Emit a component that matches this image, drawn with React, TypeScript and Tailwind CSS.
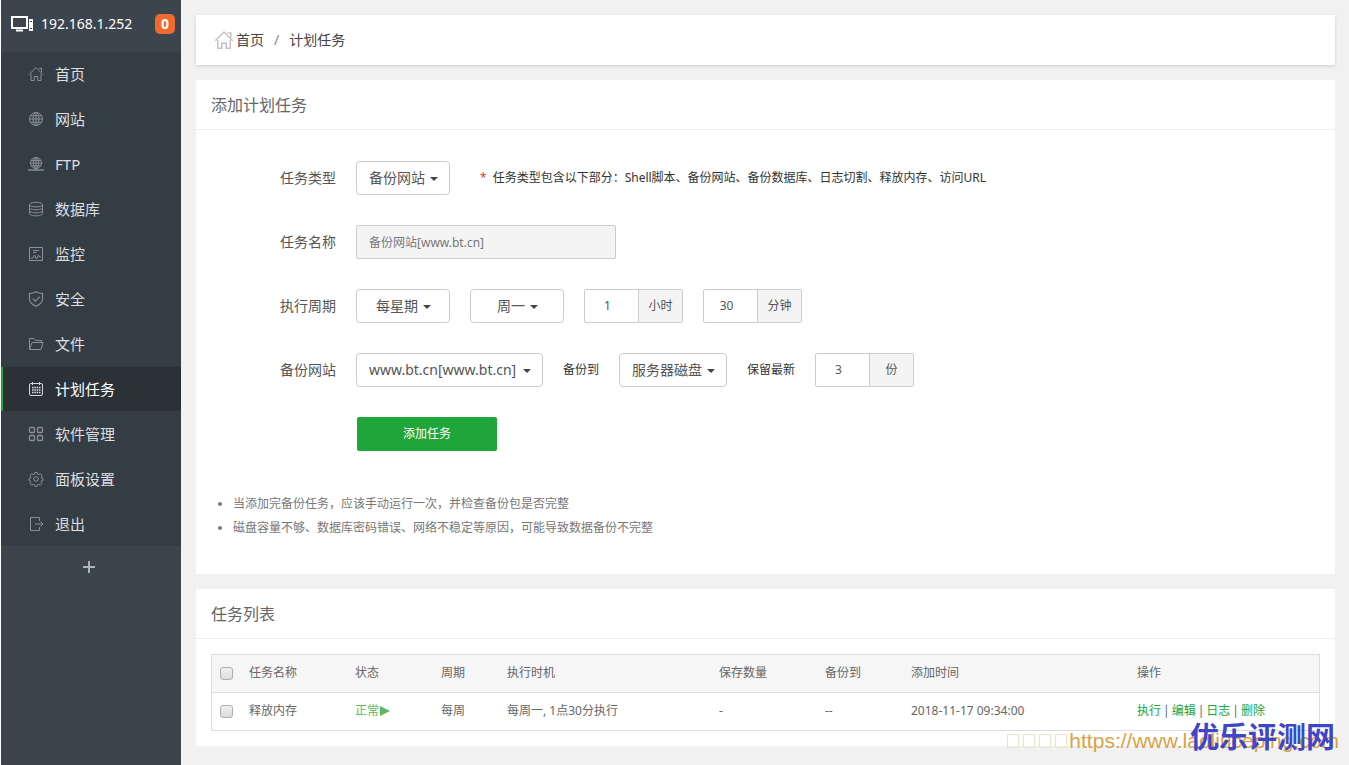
import type { ReactNode } from "react";

type IconProps = {
  children: ReactNode;
};

function MenuIcon({ children }: IconProps) {
  return (
    <svg
      viewBox="0 0 16 16"
      className="w-4 h-4 shrink-0"
      fill="none"
      stroke="currentColor"
      strokeWidth="1"
      aria-hidden="true"
    >
      {children}
    </svg>
  );
}

const homePaths = (
  <>
    <path d="M1 8.6 8 1.6l7 7" />
    <path d="M11.5 3V2.4h2V6" />
    <path d="M3 8v6.5h3.2v-4h3.6v4H13V8" />
  </>
);

const globePaths = (
  <>
    <circle cx="8" cy="8" r="6.5" />
    <ellipse cx="8" cy="8" rx="3" ry="6.5" />
    <path d="M8 1.5v13M1.5 8h13M2.5 4.8h11M2.5 11.2h11" />
  </>
);

const menus = [
  { name: "首页", icon: homePaths },
  { name: "网站", icon: globePaths },
  {
    name: "FTP",
    icon: (
      <>
        <circle cx="8" cy="7" r="5.5" />
        <ellipse cx="8" cy="7" rx="2.5" ry="5.5" />
        <path d="M8 1.5v13M2.5 7h11M3.3 4.5h9.4M3.3 9.7h9.4" />
        <path d="M0 14h16" strokeWidth="1.4" />
      </>
    ),
  },
  {
    name: "数据库",
    icon: (
      <>
        <ellipse cx="8" cy="3.6" rx="6.5" ry="2.3" />
        <path d="M1.5 3.6v9c0 1.3 3 2.2 6.5 2.2s6.5-.9 6.5-2.2v-9" />
        <path d="M1.5 6.6c0 1.3 3 2.2 6.5 2.2s6.5-.9 6.5-2.2M1.5 9.6c0 1.3 3 2.2 6.5 2.2s6.5-.9 6.5-2.2" />
      </>
    ),
  },
  {
    name: "监控",
    icon: (
      <>
        <path d="M1.5 1.5h13v13h-13zM5 4.5h6M5 6.5h3.5" />
        <path d="M3 12h2l1.5-3 2 4 2-4 1 2H13" />
      </>
    ),
  },
  {
    name: "安全",
    icon: (
      <g strokeWidth="1.2">
        <path d="M8 .8c2 1.2 4.2 1.7 6.5 1.7V8c0 3.4-2.7 5.7-6.5 7.3C4.2 13.7 1.5 11.4 1.5 8V2.5C3.8 2.5 6 2 8 .8z" />
        <path d="m4.8 7.6 2.5 2.6 4.4-4.6" />
      </g>
    ),
  },
  {
    name: "文件",
    icon: (
      <>
        <path d="M1.5 13.5v-11H6l1.5 2h6v2" />
        <path d="M1.5 13.5 4 6.5h11l-2 7z" />
      </>
    ),
  },
  {
    name: "计划任务",
    icon: (
      <>
        <rect x="1.5" y="2.5" width="13" height="12" rx="1.5" />
        <path d="M4.500 1v3M11.500 1v3" />
        <path d="M4 6.500h8.500M4 9h8.500M4 11.500h8.500" strokeWidth="1.500" strokeDasharray="1.600 .7" />
      </>
    ),
  },
  {
    name: "软件管理",
    icon: (
      <g strokeWidth="1.300">
        <rect x="1.500" y="1.500" width="5" height="5" rx="1" />
        <rect x="9.500" y="1.500" width="5" height="5" rx="1" />
        <rect x="1.500" y="9.500" width="5" height="5" rx="1" />
        <rect x="9.500" y="9.500" width="5" height="5" rx="1" />
      </g>
    ),
  },
  {
    name: "面板设置",
    icon: (
      <>
        <circle cx="8" cy="8" r="2.300" />
        <path d="M6.800 1.500h2.400l.4 1.700 1.300.5 1.500-.9 1.700 1.700-.9 1.500.5 1.200 1.300.4v1.800l-1.500.5-.5 1.200.8 1.500-1.600 1.600-1.500-.9-1.300.5-.4 1.500H6.800l-.4-1.500-1.300-.5-1.500.9L2 12.600l.8-1.500-.5-1.200L1 9.400V7.600l1.400-.4.500-1.200-.9-1.500 1.700-1.700 1.500.9 1.200-.5z" />
      </>
    ),
  },
  {
    name: "退出",
    icon: (
      <>
        <path d="M11.500 5V1.500h-9v13h9V11" />
        <path d="M7 8h8M12.500 5.500 15 8l-2.500 2.500" />
      </>
    ),
  },
];

function Sidebar() {
  return (
    <aside className="w-[181px] shrink-0 border-l border-white bg-[#3c444d]">
      <div className="h-13 flex items-center pl-[10px] pr-[6px] pb-1 text-white">
        <svg viewBox="0 0 22 16" className="w-[22px] h-4 shrink-0" fill="none" aria-hidden="true">
          <rect x="1" y="1" width="15" height="11" stroke="#fff" strokeWidth="2" />
          <path d="M5 14.500h7" stroke="#fff" strokeWidth="2" />
          <rect x="18" y="3" width="4" height="12" fill="#fff" />
          <path d="M19 5.500h2M19 12.500h2" stroke="#3c444d" />
        </svg>
        <span className="ml-2 text-sm">192.168.1.252</span>
        <span className="ml-auto w-5 h-5 rounded-[5px] bg-[#f06a2f] text-sm font-bold leading-5 text-center">
          0
        </span>
      </div>
      <nav className="bg-[#353d44]">
        {menus.map(({ name, icon }) => (
          <a
            key={name}
            href="#"
            className={
              name === "计划任务"
                ? "h-11 mb-px flex items-center gap-[11px] border-l-2 border-[#20a53a] bg-[#2c3138] pl-[25px] text-[15px] text-white"
                : "h-11 mb-px flex items-center gap-[11px] pl-[27px] text-[15px] text-[#dcdfe2]"
            }
          >
            <span className={name === "计划任务" ? "text-[#d5d8da]" : "text-[#8a9095]"}>
              <MenuIcon>{icon}</MenuIcon>
            </span>
            {name}
          </a>
        ))}
      </nav>
      <button type="button" aria-label="添加" className="w-full h-10 flex items-center justify-center pr-[5px]">
        <svg viewBox="0 0 14 14" className="w-[14px] h-[14px]" stroke="#b0b4b8" strokeWidth="2" aria-hidden="true">
          <path d="M7 1v12M1 7h12" />
        </svg>
      </button>
    </aside>
  );
}

type DropdownProps = {
  label: string;
  value: string;
  selectClass: string;
  caretClass: string;
};

function Dropdown({ label, value, selectClass, caretClass }: DropdownProps) {
  return (
    <div className="relative">
      <select
        aria-label={label}
        className={`h-[34px] block appearance-none rounded-[4px] border border-[#ccc] bg-white text-sm text-[#555] ${selectClass}`}
      >
        <option>{value}</option>
      </select>
      <svg
        viewBox="0 0 8 4"
        className={`absolute top-[16px] w-2 h-1 pointer-events-none ${caretClass}`}
        fill="#444"
        aria-hidden="true"
      >
        <path d="M0 0h8L4 4z" />
      </svg>
    </div>
  );
}

type NumberFieldProps = {
  id: string;
  value: string;
  unit: string;
};

function NumberField({ id, value, unit }: NumberFieldProps) {
  return (
    <div className="h-[34px] w-[99px] flex rounded-[2px] border border-[#ccc] overflow-hidden text-xs text-[#555]">
      <input
        id={id}
        type="text"
        inputMode="numeric"
        defaultValue={value}
        className="w-[53px] pr-2 text-center"
      />
      <label
        htmlFor={id}
        className="flex-1 flex items-center justify-center border-l border-[#ccc] bg-[#f4f4f4]"
      >
        {unit}
      </label>
    </div>
  );
}

type FormRowProps = {
  label: string;
  htmlFor?: string;
  children: ReactNode;
};

function FormRow({ label, htmlFor, children }: FormRowProps) {
  return (
    <div className="flex items-center gap-5 text-xs text-[#333]">
      <label htmlFor={htmlFor} className="w-[125px] text-right text-sm text-[#555]">
        {label}
      </label>
      {children}
    </div>
  );
}

type PanelProps = {
  title: string;
  children: ReactNode;
};

function Panel({ title, children }: PanelProps) {
  return (
    <section className="bg-white">
      <h2 className="h-[50px] px-[15px] border-b border-[#eee] text-base leading-[50px] text-[#666]">
        {title}
      </h2>
      {children}
    </section>
  );
}

function Check({ label }: { label: string }) {
  return (
    <input
      type="checkbox"
      aria-label={label}
      className="block w-[13px] h-[13px] appearance-none rounded-[3px] border border-[#b0b0b0] bg-linear-to-b from-[#f0f0f0] to-[#dcdcdc]"
    />
  );
}

const columns = [
  { name: "任务名称", width: "w-[106px]" },
  { name: "状态", width: "w-[86px]" },
  { name: "周期", width: "w-[66px]" },
  { name: "执行时机", width: "w-[212px]" },
  { name: "保存数量", width: "w-[106px]" },
  { name: "备份到", width: "w-[86px]" },
  { name: "添加时间", width: "w-[226px]" },
  { name: "操作", width: "w-[190px]" },
];

const actions = ["执行", "编辑", "日志", "删除"];

function TaskTable() {
  return (
    <div className="border border-[#ddd]">
      <table className="w-full table-fixed text-left text-xs text-[#666]">
        <thead>
          <tr className="h-[37px] border-b border-[#ddd] bg-[#f6f6f6]">
            <th className="w-[29px] pl-2">
              <Check label="全选" />
            </th>
            {columns.map(({ name, width }) => (
              <th key={name} className={`px-2 font-normal ${width}`}>
                {name}
              </th>
            ))}
          </tr>
        </thead>
        <tbody>
          <tr className="h-[38px]">
            <td className="pl-2">
              <Check label="释放内存" />
            </td>
            <td className="px-2">释放内存</td>
            <td className="px-2 text-[#5cb85c]">
              <a href="#" className="flex items-center">
                正常
                <svg viewBox="0 0 10 10" className="w-[10px] h-[10px] ml-px" fill="currentColor" aria-hidden="true">
                  <path d="M0 0l10 5-10 5z" />
                </svg>
              </a>
            </td>
            <td className="px-2">每周</td>
            <td className="px-2">每周一, 1点30分执行</td>
            <td className="px-2">-</td>
            <td className="px-2">--</td>
            <td className="px-2">2018-11-17 09:34:00</td>
            <td className="px-2">
              {actions.map((action, i) => (
                <span key={action}>
                  {i > 0 && <span className="mx-0.5">|</span>}
                  <a href="#" className="text-[#20a53a]">
                    {action}
                  </a>
                </span>
              ))}
            </td>
          </tr>
        </tbody>
      </table>
    </div>
  );
}

function Watermark() {
  return (
    <div className="absolute right-[10px] bottom-3 flex items-center pointer-events-none">
      <div className="flex gap-1 mr-0.5">
        {[0, 1, 2, 3].map((n) => (
          <span key={n} className="w-3 h-[14px] border border-[#eae3c8]" />
        ))}
      </div>
      <span className="font-['Liberation_Sans',sans-serif] text-[21px] leading-6 text-[#dc9f45]">
        https://www.laoliuceping.com
      </span>
      <span className="absolute right-1 -top-3 text-[29px] leading-10 font-bold text-[#4046c8]">
        优乐评测网
      </span>
    </div>
  );
}

function App() {
  return (
    <div className="relative min-h-screen flex bg-[#f1f1f1] font-['Noto_Sans','Noto_Sans_CJK_SC',sans-serif]">
      <Sidebar />
      <main className="flex-1 min-w-0 flex flex-col gap-[15px] pt-[15px] pl-[15px] pr-[14px]">
        <div className="h-[50px] flex items-center pl-[18px] bg-white shadow-[0_1px_3px_rgba(0,0,0,0.15)] text-sm text-[#444]">
          <svg
            viewBox="0 0 16 16"
            className="w-5 h-5 mr-[2px]"
            fill="none"
            stroke="#c4c4c4"
            strokeWidth="1.2"
            aria-hidden="true"
          >
            {homePaths}
          </svg>
          <a href="#">首页</a>
          <span className="mx-[10px] text-[#888]">/</span>
          <span>计划任务</span>
        </div>

        <Panel title="添加计划任务">
          <form className="px-[15px] pt-[31px] pb-[34px]">
            <div className="flex flex-col gap-[30px]">
              <FormRow label="任务类型">
                <Dropdown label="任务类型" value="备份网站" selectClass="w-[94px] pl-[12px]" caretClass="right-[12px]" />
                <p className="ml-[10px]">
                  <span className="mr-1.5 text-[#e0392b]">*</span>
                  任务类型包含以下部分：Shell脚本、备份网站、备份数据库、日志切割、释放内存、访问URL
                </p>
              </FormRow>
              <FormRow label="任务名称" htmlFor="task-name">
                <input
                  id="task-name"
                  type="text"
                  readOnly
                  defaultValue="备份网站[www.bt.cn]"
                  className="w-[260px] h-[34px] px-[12px] rounded-[2px] border border-[#ccc] bg-[#f4f4f4] text-xs text-[#777]"
                />
              </FormRow>
              <FormRow label="执行周期">
                <Dropdown label="执行周期" value="每星期" selectClass="w-[94px] pl-[19px]" caretClass="right-[19px]" />
                <Dropdown label="星期" value="周一" selectClass="w-[94px] pl-[26px]" caretClass="right-[26px]" />
                <NumberField id="hour" value="1" unit="小时" />
                <NumberField id="minute" value="30" unit="分钟" />
              </FormRow>
              <FormRow label="备份网站">
                <Dropdown
                  label="备份网站"
                  value="www.bt.cn[www.bt.cn]"
                  selectClass="w-[187px] pl-[12px]"
                  caretClass="right-[12px]"
                />
                <span>备份到</span>
                <Dropdown label="备份到" value="服务器磁盘" selectClass="w-[108px] pl-[12px]" caretClass="right-[12px]" />
                <span>保留最新</span>
                <NumberField id="keep" value="3" unit="份" />
              </FormRow>
              <button
                type="button"
                className="w-[140px] h-[34px] ml-[146px] rounded-[2px] bg-[#20a53a] text-xs text-white"
              >
                添加任务
              </button>
            </div>
            <ul className="mt-[41px] pl-[22px] list-disc text-xs leading-6 text-[#777]">
              <li>当添加完备份任务，应该手动运行一次，并检查备份包是否完整</li>
              <li>磁盘容量不够、数据库密码错误、网络不稳定等原因，可能导致数据备份不完整</li>
            </ul>
          </form>
        </Panel>

        <Panel title="任务列表">
          <div className="p-[15px]">
            <TaskTable />
          </div>
        </Panel>
      </main>
      <Watermark />
    </div>
  );
}

export default App;
